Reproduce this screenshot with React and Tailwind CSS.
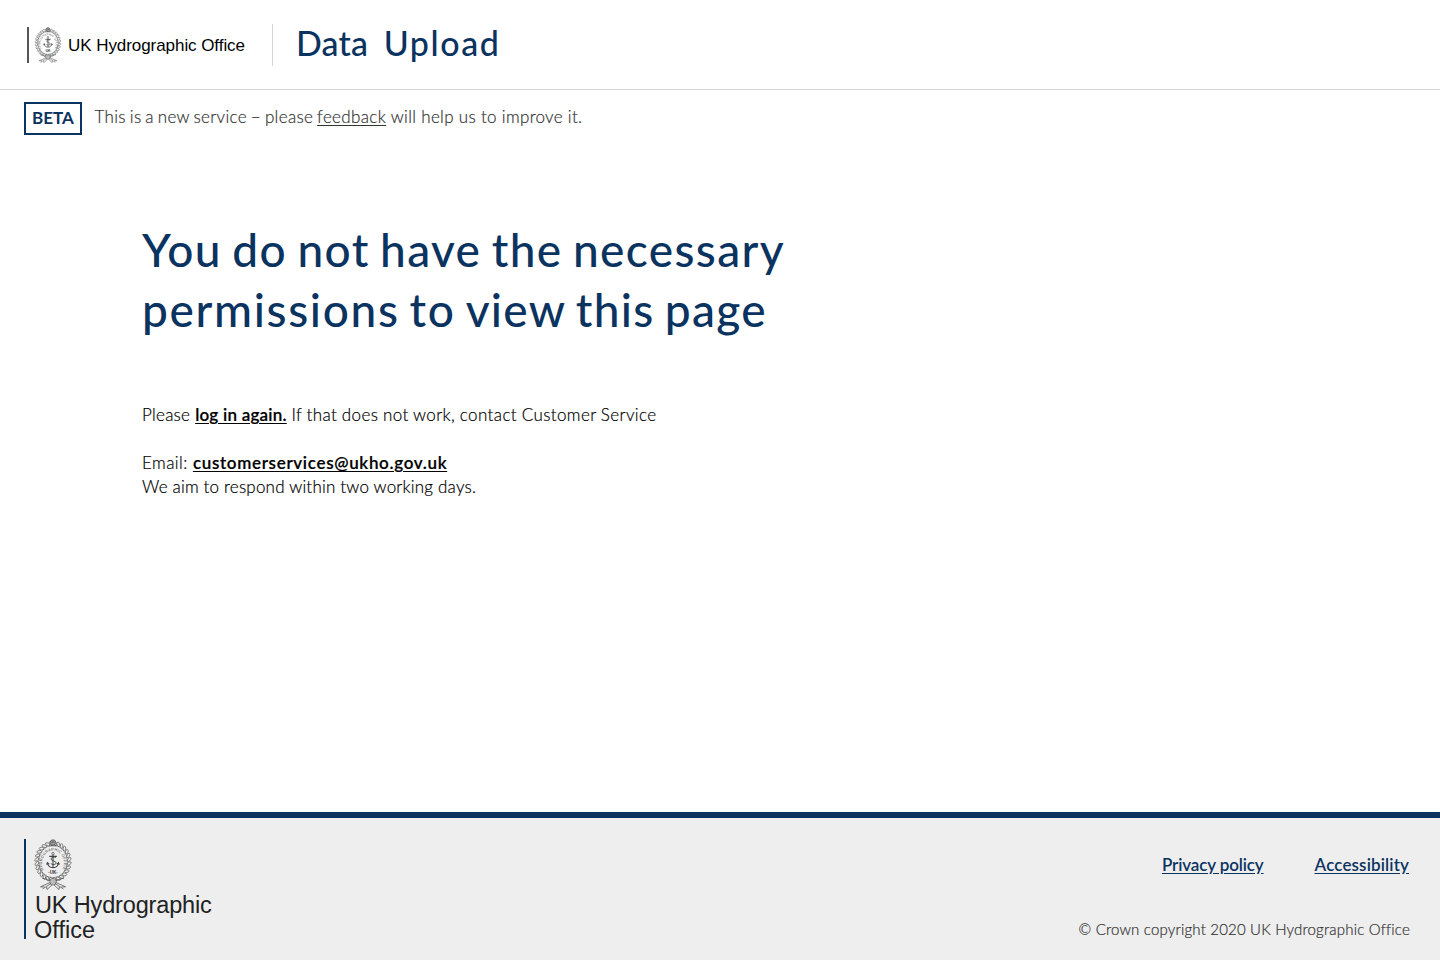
function Crest({ className }) {
  const leaves = Array.from({ length: 28 }, (_, i) => {
    const a = ((i + 0.5) / 28) * Math.PI * 2;
    return {
      x: 19 + Math.sin(a) * 16.2,
      y: 22.5 - Math.cos(a) * 18.2,
      r: ((i + 0.5) / 28) * 360 + 50,
    };
  });
  return (
    <svg className={className} viewBox="0 0 38 51" fill="none" stroke="#444" aria-hidden="true">
      <defs>
        <path id="crest-ring" d="M9.8 31A10.9 12.6 0 1 1 28.2 31" />
      </defs>
      <g strokeWidth=".6">
        {leaves.map((l, i) => (
          <ellipse key={i} cx={l.x} cy={l.y} rx="2.4" ry="1.3" transform={`rotate(${l.r} ${l.x} ${l.y})`} />
        ))}
      </g>
      <ellipse cx="19" cy="22.5" rx="14.3" ry="16.2" strokeWidth=".4" />
      <text fontFamily="Liberation Sans, sans-serif" fontSize="3.8" fill="#444" stroke="none">
        <textPath href="#crest-ring" textLength="50">HYDROGRAPHIC OFFICE</textPath>
      </text>
      <text x="19" y="35" textAnchor="middle" fontFamily="Liberation Sans, sans-serif" fontSize="4.6" fontWeight="700" fill="#333" stroke="none">·UK·</text>
      <circle cx="19" cy="14.6" r="1.2" strokeWidth=".7" />
      <path d="M15.2 17.4h7.6M19 16v12.2M13.4 24c.5 2.8 3 4.6 5.6 4.6s5.1-1.8 5.6-4.6M12.6 25.6l.8-2 1.7 1.6M25.4 25.6l-.8-2-1.7 1.6" strokeWidth="1.1" />
      <path d="M22 18.4c-2-.8-5 0-5 1.6 0 2 5.2 1.8 5.2 4 0 1.8-3.8 2.2-5.4.6" strokeWidth=".9" />
      <circle cx="19" cy="3.5" r="2.7" fill="#aaa" strokeWidth=".7" />
      <path d="M17.2 3.7h3.6M17.8 2l1.2 1 1.2-1M15.4 6.8h7.2" strokeWidth=".6" />
      <ellipse cx="19" cy="42.7" rx="3.2" ry="3.4" fill="#bbb" strokeWidth=".5" />
      <path d="M16 41.5l-8-2.5M22 41.5l8-2.5M17 44.5L8.5 50M16 43.5l-9.5 4.3 4 .2M18 46l-5 4.5-.4-2.6M21 44.5l8.5 5.5M22 43.5l9.5 4.3-4 .2M20 46l5 4.5.4-2.6" strokeWidth=".7" />
    </svg>
  );
}

export default function App() {
  return (
    <div className="flex h-[960px] flex-col bg-white font-['Lato',sans-serif] text-black">
      <header className="flex h-[90px] shrink-0 items-start border-b border-[#d6d6d6]">
        <a className="mt-[27px] ml-[27px] flex h-9 w-[245px] items-center border-l-2 border-[#555]">
          <Crest className="ml-[5px] h-9 w-7 shrink-0" />
          <span className="ml-[6px] font-['Liberation_Sans',sans-serif] text-[17px] leading-none whitespace-nowrap tracking-[-0.06px]">UK Hydrographic Office</span>
        </a>
        <div className="mt-6 h-[42px] border-l border-[#d6d6d6] pl-[23px]">
          <h1 className="text-[34px] leading-[38px] font-medium whitespace-pre text-[#0b335f]">
            <span className="tracking-[0.2px]">Data</span>
            <span className="tracking-[1.6px] [word-spacing:-2.5px]">{"  "}Upload</span>
          </h1>
        </div>
      </header>

      <div className="mt-3 ml-6 flex h-[33px] shrink-0">
        <strong className="flex w-[58px] items-center justify-center border-2 border-[#0b335f] pb-[2px] text-[17px] leading-none font-bold text-[#0b335f]">BETA</strong>
        <p className="ml-[12.5px] text-[17px] leading-[30px] font-light whitespace-nowrap text-[#333] [-webkit-text-stroke:0.2px]">
          <span className="tracking-[0.33px] [word-spacing:-1.05px]">This is a new service – please </span>
          <a className="tracking-[0.35px] underline underline-offset-2">feedback</a>
          <span className="tracking-[0.32px]"> will help us to improve it.</span>
        </p>
      </div>

      <main className="ml-[142px] grow">
        <h2 className="mt-[85px] text-[46px] leading-[60px] font-medium whitespace-nowrap text-[#0b335f]">
          <span className="block tracking-[1.37px] [word-spacing:-2.6px]">You do not have the necessary</span>
          <span className="block tracking-[1.65px] [word-spacing:-3.2px]">permissions to <span className="tracking-[1.3px] [word-spacing:-2.6px]">view this page</span></span>
        </h2>
        <div className="mt-[63px] text-[17px] leading-6 font-light whitespace-nowrap">
          <p className="[-webkit-text-stroke:0.2px]">
            <span className="tracking-[0.26px]">Please </span>
            <a className="font-semibold tracking-[0.23px] underline underline-offset-2">log in again.</a>
            <span className="tracking-[0.4px] [word-spacing:-0.4px]"> If that does not work, contact Customer Service</span>
          </p>
          <p className="mt-6 [-webkit-text-stroke:0.2px]">
            <span className="tracking-[0.45px]">Email: </span>
            <a className="font-semibold tracking-[0.67px] underline underline-offset-2">customerservices@ukho.gov.uk</a>
          </p>
          <p className="tracking-[0.2px] [-webkit-text-stroke:0.2px]">We aim to respond within two working days.</p>
        </div>
      </main>

      <footer className="flex h-[148px] shrink-0 justify-between border-t-6 border-[#0b335f] bg-[#eee] pt-[21px] pr-[30px] pl-6">
        <div className="h-[100px] border-l-2 border-[#0b335f] pl-2">
          <Crest className="h-[51px] w-[38px]" />
          <p className="mt-[3px] font-['Liberation_Sans',sans-serif] text-[23.5px] leading-[25px] whitespace-nowrap text-[#222]">
            <span className="block pl-px tracking-[-0.15px]">UK Hydrographic</span>
            <span className="block">Office</span>
          </p>
        </div>
        <div className="flex flex-col items-end whitespace-nowrap">
          <nav className="mt-[14px] mr-px flex gap-[51px] text-[17px] leading-6 font-semibold text-[#0b335f]">
            <a className="tracking-[-0.13px] underline underline-offset-2">Privacy policy</a>
            <a className="tracking-[0.13px] underline underline-offset-2">Accessibility</a>
          </nav>
          <p className="mt-10 text-[15px] leading-6 font-light tracking-[0.19px] text-[#333] [-webkit-text-stroke:0.2px]">© Crown copyright 2020 UK Hydrographic Office</p>
        </div>
      </footer>
    </div>
  );
}
